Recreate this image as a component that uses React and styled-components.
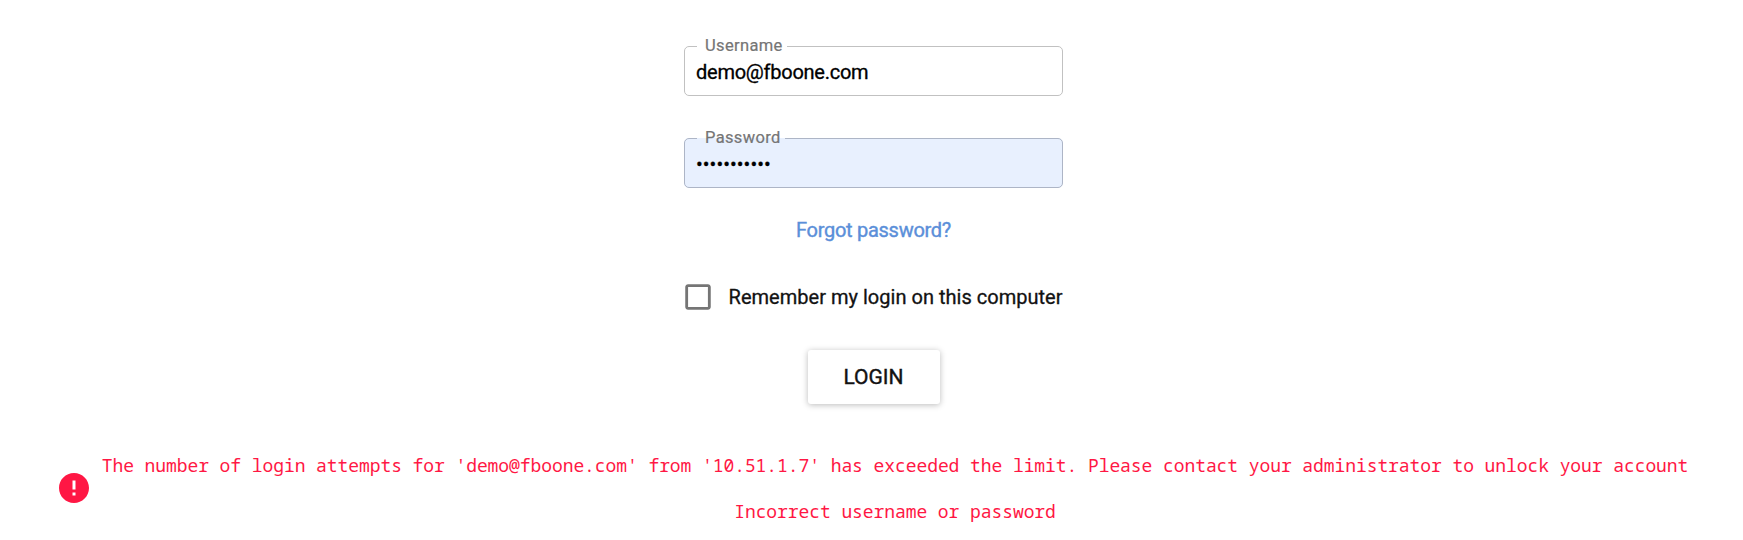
import React from 'react';
import styled, { createGlobalStyle } from 'styled-components';
import { MdCheckBoxOutlineBlank, MdError } from 'react-icons/md';

const GlobalStyle = createGlobalStyle`
  * {
    box-sizing: border-box;
  }

  body {
    margin: 0;
    background: #fff;
    color: #121212;
    font-family: Roboto, sans-serif;
    font-size: 20px;
    overflow: hidden;
  }
`;

const Page = styled.main`
  display: flex;
  flex-direction: column;
  height: 540px;
  padding-top: 35px;
`;

const Form = styled.form`
  display: flex;
  flex-direction: column;
  align-items: center;
  width: 379px;
  margin-left: 684px;
`;

const Field = styled.fieldset`
  width: 100%;
  height: 61px;
  margin: 0 0 31px;
  padding: 0;
  min-width: 0;
  border: 1px solid ${({ $filled }) => ($filled ? '#adb5c6' : '#c1c1c1')};
  border-radius: 5px;
  background: ${({ $filled }) => ($filled ? '#e8f0fe' : '#fff')};
`;

const Legend = styled.legend`
  height: 22px;
  margin-left: 12px;
  padding: 0 4px 0 8px;
  color: #757575;
  font-size: 16.5px;
  line-height: 21px;
  letter-spacing: 0.35px;
  -webkit-text-stroke: 0.2px;
`;

const Input = styled.input`
  display: block;
  width: 100%;
  height: 30px;
  padding: 0 11px;
  border: 0;
  outline: 0;
  background: transparent;
  color: #000;
  font: 400 20px Roboto, sans-serif;
  letter-spacing: ${({ type }) => (type === 'password' ? '0.05px' : '-0.25px')};
  -webkit-text-stroke: 0.3px;
`;

const ForgotLink = styled.a`
  color: #5b8fd9;
  line-height: 24px;
  margin-top: -1px;
  letter-spacing: -0.28px;
  text-decoration: none;
  -webkit-text-stroke: 0.4px;
`;

const Remember = styled.label`
  display: flex;
  align-items: center;
  justify-content: space-between;
  width: 382px;
  height: 34px;
  margin: 38px 0 36px -4px;
  letter-spacing: 0.02px;
  white-space: nowrap;
  -webkit-text-stroke: 0.3px;

  svg {
    flex: none;
    color: #757575;
  }
`;

const LoginButton = styled.button`
  width: 132px;
  height: 54px;
  padding: 0;
  border: 0;
  border-radius: 3px;
  background: #fff;
  color: #121212;
  font: 400 21px Roboto, sans-serif;
  -webkit-text-stroke: 0.4px;
  box-shadow: 0 1px 6px rgba(0, 0, 0, 0.27);
`;

const Errors = styled.section`
  display: flex;
  align-items: center;
  gap: 9px;
  margin: 38px 0 0 56px;
  color: #ff1744;

  svg {
    flex: none;
  }
`;

const Messages = styled.div`
  width: 1588px;
  font: 18px/46px 'Noto Sans Mono', 'DejaVu Sans Mono', monospace;
  letter-spacing: -0.08px;
  text-align: center;
  white-space: nowrap;

  p {
    margin: 0;
  }
`;

export default () => (
  <Page>
    <GlobalStyle />
    <Form>
      <Field>
        <Legend>Username</Legend>
        <Input type="text" aria-label="Username" defaultValue="demo@fboone.com" spellCheck={false} />
      </Field>
      <Field $filled>
        <Legend>Password</Legend>
        <Input type="password" aria-label="Password" defaultValue="demo1234567" />
      </Field>
      <ForgotLink href="#forgot">Forgot password?</ForgotLink>
      <Remember>
        <MdCheckBoxOutlineBlank size={34} />
        <span>Remember my login on this computer</span>
      </Remember>
      <LoginButton type="button">LOGIN</LoginButton>
    </Form>
    <Errors role="alert">
      <MdError size={36} />
      <Messages>
        <p>
          The number of login attempts for &apos;demo@fboone.com&apos; from &apos;10.51.1.7&apos; has
          {' '}
          exceeded the limit. Please contact your administrator to unlock your account
        </p>
        <p>Incorrect username or password</p>
      </Messages>
    </Errors>
  </Page>
);
